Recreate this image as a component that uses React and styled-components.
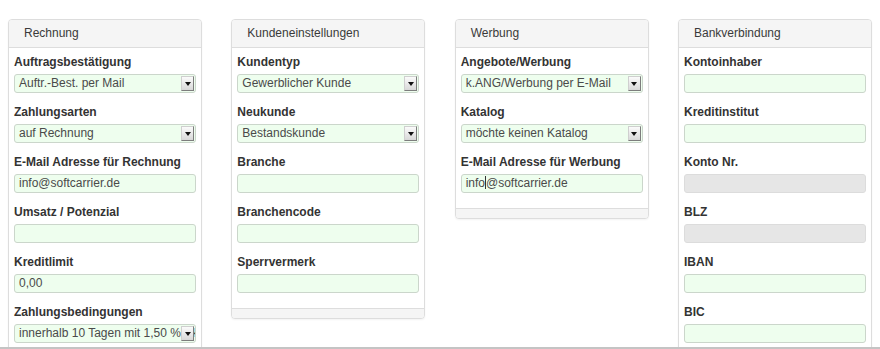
import React from 'react'
import styled, { createGlobalStyle } from 'styled-components'

const GlobalStyle = createGlobalStyle`
  html, body {
    margin: 0;
    padding: 0;
    background: #ffffff;
    font-family: "Liberation Sans", Arial, sans-serif;
    color: #333333;
    overflow: hidden;
  }
`

const Page = styled.div`
  display: flex;
  justify-content: space-between;
  align-items: flex-start;
  width: 864px;
  padding: 19px 8px 0;
`

const Panel = styled.section`
  width: 194px;
  box-sizing: border-box;
  border: 1px solid #dddddd;
  border-radius: 4px;
  background: #ffffff;
  box-shadow: 0 1px 2px rgba(0, 0, 0, 0.05);
  overflow: hidden;
`

const PanelHeader = styled.div`
  height: 27px;
  line-height: 27px;
  padding-left: 15px;
  background: #f5f5f5;
  border-bottom: 1px solid #dddddd;
  font-size: 12px;
  color: #3a3a3a;
`

const PanelBody = styled.div`
  padding: 5px 5px 5px;
`

const PanelFooter = styled.div`
  height: 9px;
  background: #f5f5f5;
  border-top: 1px solid #dddddd;
`

const Field = styled.div`
  margin-bottom: 10px;
`

const Label = styled.div`
  height: 18px;
  line-height: 18px;
  margin-bottom: 3px;
  font-size: 12px;
  font-weight: bold;
  color: #333333;
`

const Input = styled.div`
  position: relative;
  height: 19px;
  box-sizing: border-box;
  border: 1px solid ${p => (p.$disabled ? '#dcdcdc' : '#cbd6cb')};
  border-radius: 3px;
  background: ${p => (p.$disabled ? '#e6e6e6' : '#eefeee')};
  padding: 0 4px;
  font-size: 12px;
  line-height: 17px;
  color: #4a4a4a;
  white-space: nowrap;
  overflow: hidden;
`

const Caret = styled.span`
  display: inline-block;
  width: 1px;
  height: 13px;
  background: #333;
  vertical-align: -2px;
`

const Arrow = styled.span`
  position: absolute;
  top: 1px;
  right: 1px;
  width: 13px;
  height: 15px;
  box-sizing: border-box;
  border: 1px solid #cfcfcf;
  border-right-color: #7d7d7d;
  border-bottom-color: #7d7d7d;
  background: linear-gradient(#fbfbfb, #d8d8d8);
  display: flex;
  align-items: center;
  justify-content: center;

  &::after {
    content: '';
    border-left: 3px solid transparent;
    border-right: 3px solid transparent;
    border-top: 4px solid #111;
  }
`

const BottomRule = styled.div`
  position: fixed;
  left: 0;
  right: 0;
  bottom: 0;
  height: 2px;
  background: #c4c4c4;
`

const panels = [
  {
    title: 'Rechnung',
    footer: false,
    fields: [
      { label: 'Auftragsbestätigung', value: 'Auftr.-Best. per Mail', select: true },
      { label: 'Zahlungsarten', value: 'auf Rechnung', select: true },
      { label: 'E-Mail Adresse für Rechnung', value: 'info@softcarrier.de' },
      { label: 'Umsatz / Potenzial', value: '' },
      { label: 'Kreditlimit', value: '0,00' },
      { label: 'Zahlungsbedingungen', value: 'innerhalb 10 Tagen mit 1,50 % Skonto', select: true },
    ],
  },
  {
    title: 'Kundeneinstellungen',
    footer: true,
    fields: [
      { label: 'Kundentyp', value: 'Gewerblicher Kunde', select: true },
      { label: 'Neukunde', value: 'Bestandskunde', select: true },
      { label: 'Branche', value: '' },
      { label: 'Branchencode', value: '' },
      { label: 'Sperrvermerk', value: '' },
    ],
  },
  {
    title: 'Werbung',
    footer: true,
    fields: [
      { label: 'Angebote/Werbung', value: 'k.ANG/Werbung per E-Mail', select: true },
      { label: 'Katalog', value: 'möchte keinen Katalog', select: true },
      { label: 'E-Mail Adresse für Werbung', value: 'info@softcarrier.de', caret: 4 },
    ],
  },
  {
    title: 'Bankverbindung',
    footer: false,
    fields: [
      { label: 'Kontoinhaber', value: '' },
      { label: 'Kreditinstitut', value: '' },
      { label: 'Konto Nr.', value: '', disabled: true },
      { label: 'BLZ', value: '', disabled: true },
      { label: 'IBAN', value: '' },
      { label: 'BIC', value: '' },
    ],
  },
]

const FieldInput = ({ field }) => (
  <Input $disabled={field.disabled}>
    {field.caret ? (
      <>
        {field.value.slice(0, field.caret)}
        <Caret />
        {field.value.slice(field.caret)}
      </>
    ) : (
      field.value
    )}
    {field.select && <Arrow />}
  </Input>
)

const App = () => {
  return (
    <>
      <GlobalStyle />
      <Page>
        {panels.map(panel => (
          <Panel key={panel.title}>
            <PanelHeader>{panel.title}</PanelHeader>
            <PanelBody>
              {panel.fields.map(field => (
                <Field key={field.label}>
                  <Label>{field.label}</Label>
                  <FieldInput field={field} />
                </Field>
              ))}
            </PanelBody>
            {panel.footer && <PanelFooter />}
          </Panel>
        ))}
      </Page>
      <BottomRule />
    </>
  )
}

export default App
